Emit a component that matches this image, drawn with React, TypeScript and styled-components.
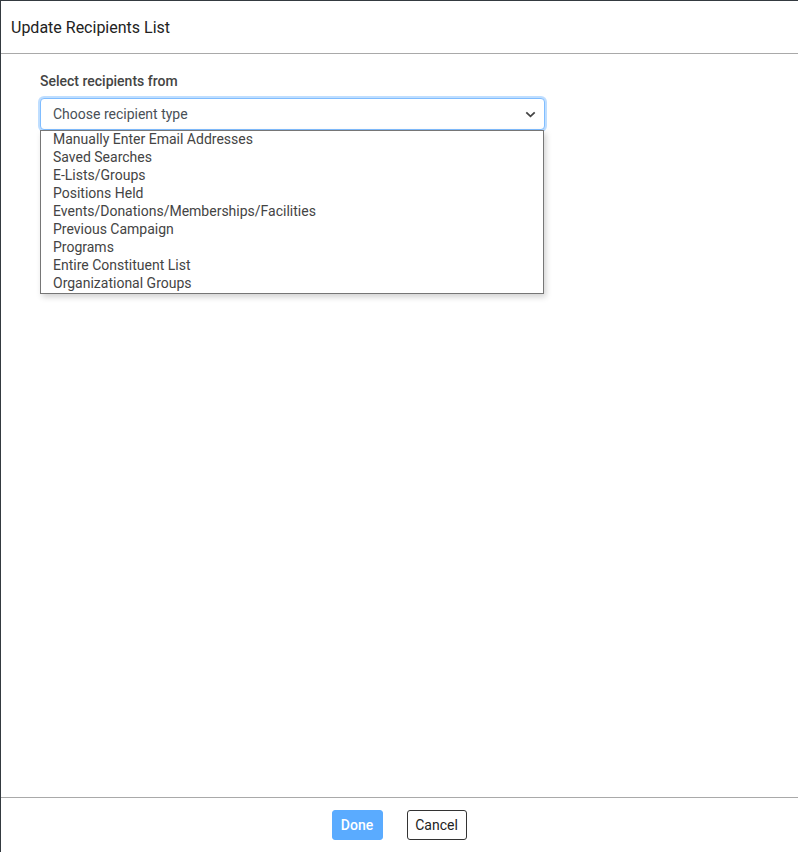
import React, { useState } from 'react';
import styled, { createGlobalStyle } from 'styled-components';

const GlobalStyle = createGlobalStyle`
  html, body {
    margin: 0;
    padding: 0;
    height: 100%;
    background: #343a40;
  }
  #root {
    height: 100%;
  }
  * {
    box-sizing: border-box;
  }
`;

const options = [
  'Manually Enter Email Addresses',
  'Saved Searches',
  'E-Lists/Groups',
  'Positions Held',
  'Events/Donations/Memberships/Facilities',
  'Previous Campaign',
  'Programs',
  'Entire Constituent List',
  'Organizational Groups',
];

const App: React.FC = () => {
  const [value, setValue] = useState('Choose recipient type');
  const [isOpen, setIsOpen] = useState(true);

  return (
    <>
      <GlobalStyle />
      <Modal>
        <Header>
          <Title>Update Recipients List</Title>
        </Header>

        <Body>
          <Label>Select recipients from</Label>
          <SelectWrap>
            <SelectBox onClick={() => setIsOpen(!isOpen)}>
              <span>{value}</span>
              <svg width="11" height="7" viewBox="0 0 11 7">
                <path d="M1.3 1.3 L5.5 5.3 L9.7 1.3" fill="none" stroke="#444" strokeWidth="1.8" />
              </svg>
            </SelectBox>
            {isOpen && (
              <OptionList>
                {options.map((opt) => (
                  <OptionItem
                    key={opt}
                    onClick={() => {
                      setValue(opt);
                      setIsOpen(false);
                    }}
                  >
                    {opt}
                  </OptionItem>
                ))}
              </OptionList>
            )}
          </SelectWrap>
        </Body>

        <Footer>
          <Button $primary $width={51}>Done</Button>
          <Button $width={60}>Cancel</Button>
        </Footer>
      </Modal>
    </>
  );
};

const Modal = styled.div`
  margin: 1px 0 0 1px;
  height: calc(100% - 1px);
  background: #fff;
  display: flex;
  flex-direction: column;
  font-family: Roboto, 'Liberation Sans', sans-serif;
`;

const Header = styled.div`
  height: 53px;
  display: flex;
  align-items: center;
  padding: 0 10px;
  border-bottom: 1px solid #a9a9a9;
  flex-shrink: 0;
`;

const Title = styled.h1`
  margin: 0;
  font-size: 16px;
  font-weight: 400;
  color: #222;
`;

const Body = styled.div`
  flex: 1;
  padding: 17px 39px 0;
`;

const Label = styled.div`
  font-size: 14px;
  font-weight: 500;
  color: #444;
  line-height: 20px;
  margin-bottom: 7px;
`;

const SelectWrap = styled.div`
  position: relative;
  width: 505px;
`;

const SelectBox = styled.div`
  height: 32px;
  display: flex;
  align-items: center;
  justify-content: space-between;
  padding: 0 8px 0 12px;
  border: 1px solid #80bdff;
  border-radius: 4px;
  box-shadow: 0 0 0 2px rgba(0, 123, 255, 0.25);
  font-size: 14px;
  color: #495057;
  cursor: pointer;
  background: #fff;
`;

const OptionList = styled.ul`
  position: absolute;
  top: 32px;
  left: 0;
  width: 504px;
  margin: 0;
  padding: 0;
  list-style: none;
  background: #fff;
  border: 1px solid #767676;
  box-shadow: 2px 3px 6px rgba(0, 0, 0, 0.18);
  z-index: 10;
`;

const OptionItem = styled.li`
  height: 18px;
  line-height: 16px;
  padding: 0 0 2px 12px;
  font-size: 14px;
  color: #444;
  cursor: default;

  &:hover {
    background: #1e90ff;
    color: #fff;
  }
`;

const Footer = styled.div`
  height: 55px;
  flex-shrink: 0;
  border-top: 1px solid #a9a9a9;
  display: flex;
  align-items: center;
  justify-content: center;
  gap: 24px;
  padding-right: 1px;
`;

const Button = styled.button<{ $primary?: boolean; $width: number }>`
  width: ${({ $width }) => $width}px;
  height: 30px;
  padding: 0;
  font-family: Roboto, 'Liberation Sans', sans-serif;
  font-size: 14px;
  font-weight: ${({ $primary }) => ($primary ? 500 : 400)};
  border-radius: 3px;
  cursor: pointer;
  border: 1px solid ${({ $primary }) => ($primary ? '#5aabff' : '#333')};
  background: ${({ $primary }) => ($primary ? '#5aabff' : '#fff')};
  color: ${({ $primary }) => ($primary ? '#fff' : '#222')};
`;

export default App;
